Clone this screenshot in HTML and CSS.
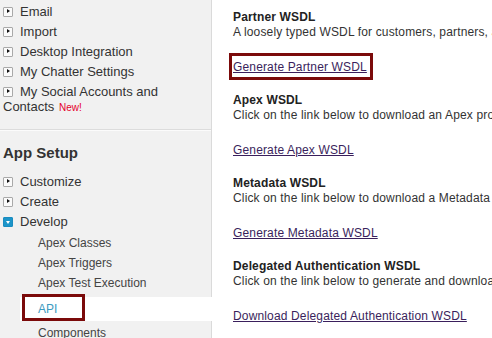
FILE: index.html
```html
<!DOCTYPE html>
<html lang="en">
  <head>
    <meta charset="UTF-8" />
    <title>API</title>
    <link rel="stylesheet" href="styles.css">
  </head>
  <body>
    <div class="page">
      <div class="sidebar">
        <ul class="nav nav--personal">
          <li class="nav-item"><span class="twist"></span>Email</li>
          <li class="nav-item"><span class="twist"></span>Import</li>
          <li class="nav-item"><span class="twist"></span>Desktop Integration</li>
          <li class="nav-item"><span class="twist"></span>My Chatter Settings</li>
          <li class="nav-item"><span class="twist"></span>My Social Accounts and Contacts <span class="new">New!</span></li>
        </ul>

        <div class="setup">
          <h2 class="setup-title">App Setup</h2>
          <ul class="nav">
            <li class="nav-item"><span class="twist"></span>Customize</li>
            <li class="nav-item"><span class="twist"></span>Create</li>
            <li class="nav-item"><span class="twist twist--open"></span>Develop</li>
          </ul>
          <ul class="subnav">
            <li class="subnav-item">Apex Classes</li>
            <li class="subnav-item">Apex Triggers</li>
            <li class="subnav-item">Apex Test Execution</li>
            <li class="subnav-item subnav-item--current"><span class="mark mark--api"></span>API</li>
            <li class="subnav-item">Components</li>
          </ul>
        </div>
      </div>

      <div class="content">
        <div class="wsdl">
          <div class="wsdl-title">Partner WSDL</div>
          <div class="wsdl-desc">A loosely typed WSDL for customers, partners, and ISVs who are building client applications</div>
          <a class="wsdl-link mark-wrap" href="#">Generate Partner WSDL<span class="mark mark--link"></span></a>
        </div>
        <div class="wsdl">
          <div class="wsdl-title">Apex WSDL</div>
          <div class="wsdl-desc">Click on the link below to download an Apex programming WSDL</div>
          <a class="wsdl-link" href="#">Generate Apex WSDL</a>
        </div>
        <div class="wsdl">
          <div class="wsdl-title">Metadata WSDL</div>
          <div class="wsdl-desc">Click on the link below to download a Metadata WSDL</div>
          <a class="wsdl-link" href="#">Generate Metadata WSDL</a>
        </div>
        <div class="wsdl">
          <div class="wsdl-title">Delegated Authentication WSDL</div>
          <div class="wsdl-desc">Click on the link below to generate and download the WSDL</div>
          <a class="wsdl-link" href="#">Download Delegated Authentication WSDL</a>
        </div>
      </div>
    </div>
  </body>
</html>
```

FILE: styles.css
```css
body {
  margin: 0;
  font-family: Arial, "Liberation Sans", sans-serif;
  color: #222;
  background: #fff;
}

.page {
  display: flex;
  width: 492px;
  height: 338px;
  overflow: hidden;
}

/* 左のメニュー */
.sidebar {
  width: 212px;
  flex-shrink: 0;
  background: #f1f1f1;
  border-right: 1px solid #dadada;
  box-sizing: border-box;
}

.nav,
.subnav {
  list-style: none;
  margin: 0;
  padding: 0;
}

.nav--personal {
  padding-top: 1px;
  padding-bottom: 12px;
  border-bottom: 1px solid #dcdcdc;
}

.nav-item {
  padding: 2.5px 8px 2.5px 3px;
  font-size: 13px;
  line-height: 15px;
  color: #333;
}

.twist {
  display: inline-block;
  position: relative;
  width: 8px;
  height: 8px;
  margin-right: 7px;
  vertical-align: -1px;
  border: 1px solid #a9a9a9;
  border-radius: 1px;
  background: #fafafa;
}

.twist::after {
  content: "";
  position: absolute;
  left: 3px;
  top: 1.5px;
  border-left: 3px solid #111;
  border-top: 2.5px solid transparent;
  border-bottom: 2.5px solid transparent;
}

.twist--open {
  border-color: #1a8cc0;
  background: #1d95c9;
}

.twist--open::after {
  left: 1.5px;
  top: 3px;
  border-top: 3px solid #fff;
  border-left: 2.5px solid transparent;
  border-right: 2.5px solid transparent;
  border-bottom: 0;
}

.new {
  font-size: 10px;
  color: #e5002b;
  margin-left: 1px;
}

.setup {
  border-top: 1px solid #fbfbfb;
  padding-top: 12px;
}

.setup-title {
  margin: 0 0 8px 3px;
  font-size: 15px;
  line-height: 20px;
  font-weight: bold;
  color: #333;
}

.subnav {
  padding-top: 2px;
}

.subnav-item {
  position: relative;
  padding-left: 38px;
  font-size: 12px;
  line-height: 20px;
  color: #444;
}

.subnav-item--current {
  margin: 4px -1px 2px 20px;
  padding-left: 18px;
  line-height: 24px;
  background: #fff;
  color: #3c9bbf;
}

/* 赤い枠 */
.mark {
  position: absolute;
  border: 3px solid #7b0a0a;
  pointer-events: none;
}

.mark--api {
  left: 2px;
  top: -3px;
  width: 57px;
  height: 21px;
}

.mark-wrap {
  position: relative;
}

.mark--link {
  left: -4px;
  right: -6px;
  top: -7px;
  bottom: -6px;
}

/* 右側 */
.content {
  flex: 1;
  min-width: 0;
  padding: 10px 0 0 21px;
  font-size: 12px;
  line-height: 15px;
  letter-spacing: 0.15px;
  white-space: nowrap;
}

.wsdl {
  margin-bottom: 18px;
}

.wsdl-title {
  font-weight: bold;
  color: #222;
}

.wsdl-desc {
  color: #333;
  margin-bottom: 20px;
}

.wsdl-link {
  color: #3a1f5c;
  text-decoration: underline;
}
```
